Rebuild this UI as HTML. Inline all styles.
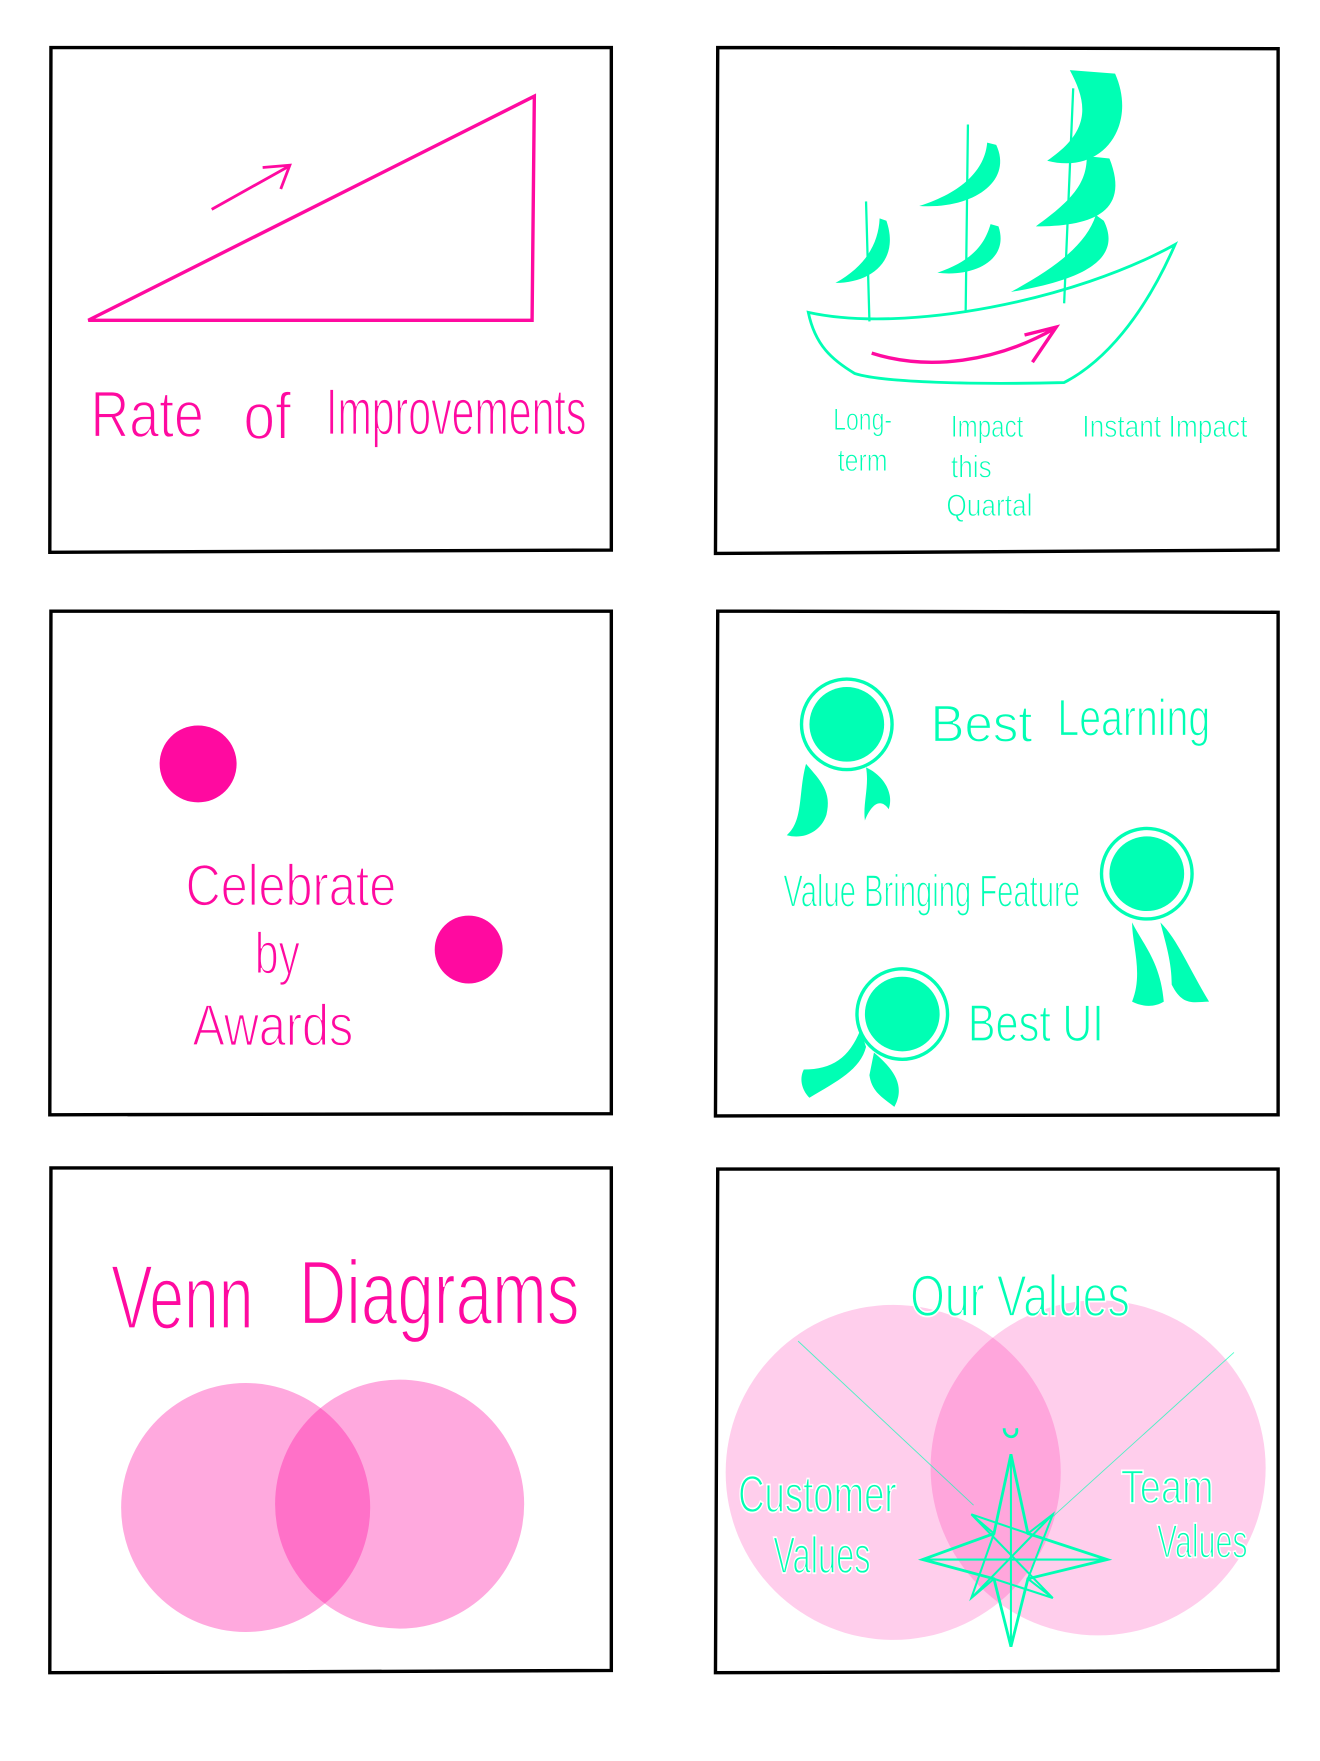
<!DOCTYPE html>
<html><head><meta charset="utf-8"><style>html,body{margin:0;padding:0;background:#fff;}svg{display:block;}
text{font-family:"Liberation Sans Narrow","Liberation Sans",sans-serif;}</style></head><body>
<svg width="1320" height="1761" viewBox="0 0 1166 1556" preserveAspectRatio="none" xmlns="http://www.w3.org/2000/svg">
<g fill="none" stroke="#000" stroke-width="3">
<path d="M45 42 L540 42 L540 486 L44 488 Z"/>
<path d="M634 42 L1129 43 L1129 486 L632 489 Z"/>
<path d="M45 540 L540 540 L540 984 L44 985 Z"/>
<path d="M634 540 L1129 541 L1129 985 L632 986 Z"/>
<path d="M45 1032 L540 1032 L540 1476 L44 1478 Z"/>
<path d="M634 1033 L1129 1033 L1129 1476 L632 1478 Z"/>
</g>
<g stroke="#ff0aa0" fill="none" stroke-width="3">
<path d="M78 283 L472 85 L470 283 Z"/>
<path d="M187 185 L255 147 M232 148 L256 146 L248 167" stroke-width="2.5"/>
</g>
<g fill="#ff0aa0" font-size="58" stroke="#fff" stroke-width="1.5">
<text x="80" y="386" textLength="100" lengthAdjust="spacingAndGlyphs">Rate</text>
<text x="215" y="388" textLength="42" lengthAdjust="spacingAndGlyphs">of</text>
<text x="288" y="384" textLength="230" lengthAdjust="spacingAndGlyphs">Improvements</text>
</g>
<g fill="#00ffb4">
<path d="M985 65 C1005 110 975 155 925 142 C965 115 960 90 945 62 Z"/>
<path d="M980 140 C1000 190 960 200 915 200 C950 175 960 160 960 138 Z"/>
<path d="M975 195 C995 235 940 250 893 258 C935 235 960 215 968 190 Z"/>
<path d="M880 128 C895 160 860 185 812 182 C850 170 870 150 872 126 Z"/>
<path d="M882 200 C892 230 860 245 828 241 C860 230 870 215 875 198 Z"/>
<path d="M783 195 C795 230 770 250 738 250 C765 235 776 215 777 193 Z"/>
</g>
<g stroke="#00ffb4" fill="none" stroke-width="2">
<path d="M765 178 L768 284 M855 110 L853 276 M948 78 L940 268"/>
<path d="M714 276 C800 295 950 265 1038 216 C1010 280 975 320 940 338 C860 340 780 338 755 330 C735 318 720 305 714 276 Z" stroke-width="2.5"/>
</g>
<g stroke="#ff0aa0" fill="none" stroke-width="3">
<path d="M770 312 C820 328 880 320 932 290 M905 296 L933 289 L912 320"/>
</g>
<g fill="#00ffb4" font-size="28" stroke="#fff" stroke-width="0.8">
<text x="736" y="380" textLength="52" lengthAdjust="spacingAndGlyphs">Long-</text>
<text x="740" y="416" textLength="44" lengthAdjust="spacingAndGlyphs">term</text>
<text x="840" y="386" textLength="64" lengthAdjust="spacingAndGlyphs">Impact</text>
<text x="840" y="422" textLength="36" lengthAdjust="spacingAndGlyphs">this</text>
<text x="836" y="456" textLength="76" lengthAdjust="spacingAndGlyphs">Quartal</text>
<text x="956" y="386" textLength="146" lengthAdjust="spacingAndGlyphs">Instant Impact</text>
</g>
<g fill="#ff0aa0">
<circle cx="175" cy="675" r="34"/>
<circle cx="414" cy="839" r="30"/>
</g>
<g fill="#ff0aa0" font-size="52" stroke="#fff" stroke-width="1.5">
<text x="164" y="800" textLength="186" lengthAdjust="spacingAndGlyphs">Celebrate</text>
<text x="225" y="860" textLength="40" lengthAdjust="spacingAndGlyphs">by</text>
<text x="170" y="924" textLength="142" lengthAdjust="spacingAndGlyphs">Awards</text>
</g>
<g fill="#00ffb4" stroke="#00ffb4">
<circle cx="748" cy="640" r="40" fill="none" stroke-width="3"/>
<circle cx="748" cy="640" r="33" stroke="none"/>
<path d="M712 675 C725 690 735 700 730 720 C725 735 710 742 695 738 C710 725 705 700 712 675 Z" stroke="none"/>
<path d="M765 678 C780 685 790 700 785 715 C778 705 770 710 764 725 C762 710 768 695 765 678 Z" stroke="none"/>
<circle cx="1013" cy="772" r="40" fill="none" stroke-width="3"/>
<circle cx="1013" cy="772" r="33" stroke="none"/>
<path d="M1000 815 C1010 835 1025 850 1028 885 C1020 890 1010 890 1000 885 C1010 860 1000 835 1000 815 Z" stroke="none"/>
<path d="M1025 815 C1040 830 1050 855 1068 885 C1055 885 1045 890 1035 870 C1035 850 1030 835 1025 815 Z" stroke="none"/>
<circle cx="797" cy="896" r="40" fill="none" stroke-width="3"/>
<circle cx="797" cy="896" r="33" stroke="none"/>
<path d="M760 910 C750 935 735 945 710 945 C705 955 710 965 715 970 C740 955 760 945 765 925 Z" stroke="none"/>
<path d="M772 930 C790 945 800 960 790 978 C780 970 770 965 768 950 Z" stroke="none"/>
</g>
<g fill="#00ffb4" font-size="46" stroke="#fff" stroke-width="1.2">
<text x="822" y="655" textLength="90" lengthAdjust="spacingAndGlyphs">Best</text>
<text x="934" y="650" textLength="135" lengthAdjust="spacingAndGlyphs">Learning</text>
<text x="692" y="801" textLength="262" lengthAdjust="spacingAndGlyphs" font-size="40">Value Bringing Feature</text>
<text x="855" y="920" textLength="120" lengthAdjust="spacingAndGlyphs">Best UI</text>
</g>
<circle cx="217" cy="1332" r="110" fill="#ff0aa0" fill-opacity="0.35"/>
<circle cx="353" cy="1329" r="110" fill="#ff0aa0" fill-opacity="0.35"/>
<g fill="#ff0aa0" font-size="80" stroke="#fff" stroke-width="2">
<text x="98" y="1174" textLength="126" lengthAdjust="spacingAndGlyphs">Venn</text>
<text x="264" y="1170" textLength="248" lengthAdjust="spacingAndGlyphs">Diagrams</text>
</g>
<circle cx="789" cy="1301" r="148" fill="#ff0aa0" fill-opacity="0.2"/>
<circle cx="970" cy="1297" r="148" fill="#ff0aa0" fill-opacity="0.2"/>
<g stroke="#00ffb4" fill="none" stroke-width="0.8" stroke-opacity="0.7">
<path d="M705 1185 L860 1330 M1090 1195 L930 1340"/>
</g>
<g stroke="#00ffb4" fill="none" stroke-width="2.5">
<path d="M893 1285 L908 1355 L978 1378 L908 1395 L893 1455 L878 1395 L815 1378 L878 1355 Z"/>
<path d="M858 1338 L930 1412 M930 1338 L858 1412 M893 1285 L893 1455 M815 1378 L978 1378 M858 1338 L908 1355 L930 1338 L908 1395 L930 1412 L878 1395 L858 1412 L878 1355 Z" stroke-width="1.8"/>
<path d="M887 1262 C887 1272 900 1272 898 1262"/>
</g>
<g fill="#00ffb4" font-size="52" stroke="#fff" stroke-width="1.5">
<text x="804" y="1163" textLength="194" lengthAdjust="spacingAndGlyphs">Our Values</text>
<text x="652" y="1336" textLength="140" lengthAdjust="spacingAndGlyphs" font-size="46">Customer</text>
<text x="683" y="1390" textLength="86" lengthAdjust="spacingAndGlyphs" font-size="46">Values</text>
<text x="990" y="1328" textLength="82" lengthAdjust="spacingAndGlyphs" font-size="42">Team</text>
<text x="1022" y="1376" textLength="80" lengthAdjust="spacingAndGlyphs" font-size="42">Values</text>
</g>
</svg>
</body></html>
